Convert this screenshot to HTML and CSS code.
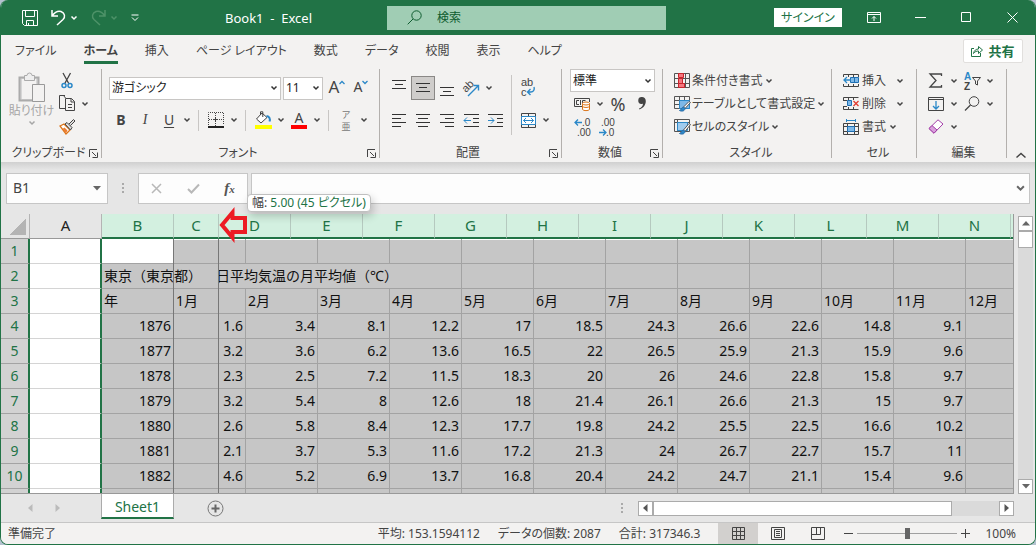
FILE: index.html
```html
<!DOCTYPE html>
<html lang="ja">
<head>
  <meta charset="UTF-8" />
  <title>Book1 - Excel</title>
  <link rel="stylesheet" href="styles.css">
</head>
<body>
  <svg class="defs" aria-hidden="true">
    <symbol id="chev" viewBox="0 0 8 8"><path d="M1.5 2.5 4 5 6.5 2.5" fill="none" stroke="currentColor" stroke-width="1.5"/></symbol>
    <symbol id="launch" viewBox="0 0 9 9"><path d="M.5 8V.5H8M3 3l4 4M8.500 3.500v5h-5" fill="none" stroke="currentColor"/></symbol>
  </svg>

  <div class="window">
    <header class="titlebar">
      <div class="quick">
        <button aria-label="上書き保存"><svg width="16" height="16" viewBox="0 0 16 16"><path d="M.5.5h15v15H2.500l-2-2zM3.500.5v6h9v-6M4.500 15.500v-5h7v5M6.500 13v2.500" /></svg></button>
        <button aria-label="元に戻す"><svg width="15" height="17" viewBox="0 0 15 17"><path d="M1 1v6h6M1 7c3-4 6-5.500 9-4.500 4 1.500 4.500 5.500 2 8L6 16" stroke-width="1.500"/></svg></button>
        <button class="chev" aria-label="元に戻す履歴"><svg width="8" height="8"><use href="#chev"/></svg></button>
        <button class="off" aria-label="やり直し"><svg width="15" height="17" viewBox="0 0 15 17"><path d="M14 1v6H8M14 7c-3-4-6-5.500-9-4.500-4 1.500-4.500 5.500-2 8L9 16" stroke-width="1.500"/></svg></button>
        <button class="chev off" aria-label="やり直し履歴"><svg width="8" height="8"><use href="#chev"/></svg></button>
        <button class="custom" aria-label="クイック アクセスのカスタマイズ"><svg width="8" height="8" viewBox="0 0 8 8"><path d="M.5 1h7M1 3.500l3 3 3-3"/></svg></button>
      </div>
      <div class="doc-title">Book1&nbsp; - &nbsp;Excel</div>
      <label class="search">
        <svg width="15" height="15" viewBox="0 0 15 15"><circle cx="9.500" cy="5.500" r="4.700"/><path d="M6 9 .7 14.300"/></svg>
        <input type="text" placeholder="検索" aria-label="検索">
      </label>
      <div class="win-buttons">
        <button class="signin">サインイン</button>
        <button aria-label="リボンの表示オプション"><svg width="14" height="11" viewBox="0 0 14 11"><path d="M.5.5h13v10H.5zM.5 2.500h13M7 9V4.500M5 6.500l2-2 2 2"/></svg></button>
        <button aria-label="最小化"><svg width="11" height="11" viewBox="0 0 11 11"><path d="M0 5.500h11"/></svg></button>
        <button aria-label="最大化"><svg width="11" height="11" viewBox="0 0 11 11"><path d="M.5.5h9v9h-9z"/></svg></button>
        <button aria-label="閉じる"><svg width="11" height="11" viewBox="0 0 11 11"><path d="m.5.5 10 10M10.500.5l-10 10"/></svg></button>
      </div>
    </header>

    <nav class="tabs">
      <a href="#">ファイル</a>
      <a href="#" class="active">ホーム</a>
      <a href="#">挿入</a>
      <a href="#">ページ レイアウト</a>
      <a href="#">数式</a>
      <a href="#">データ</a>
      <a href="#">校閲</a>
      <a href="#">表示</a>
      <a href="#">ヘルプ</a>
      <button class="share"><svg width="12" height="12" viewBox="0 0 12 12"><path d="M3 3.500H.5v8h9V8M2.500 8.500C3 5.500 5 4 7.500 4V1.500l4 3.500-4 3.500V6C5.500 6 4 6.500 2.500 8.500z"/></svg>共有</button>
    </nav>

    <div class="ribbon">
      <!-- クリップボード -->
      <section class="group clipboard">
        <div class="group-body">
          <button class="paste">
            <svg width="28" height="31" viewBox="0 0 28 31"><path d="M1.500 5.500h19v23h-19z" fill="#d6d6d6" stroke="#ababab" stroke-width="2"/><path d="M4 7h14v20H4z" fill="#f3f2f1"/><path d="M6.500 8.500v-5H9a2.500 2.500 0 0 1 5 0h2.500v5z" fill="#eee" stroke="#ababab"/><path d="M14.500 12.500h12v17h-12z" fill="#f3f2f1" stroke="#999"/></svg>
            <span>貼り付け</span>
            <svg width="8" height="8"><use href="#chev"/></svg>
          </button>
          <div class="rows three">
            <div class="row"><button class="ic" aria-label="切り取り"><svg width="12" height="17" viewBox="0 0 12 17"><path d="M2 1l6 11M9.500 1l-6 11" fill="none" stroke="#444" stroke-width="1.300"/><circle cx="3" cy="13.500" r="2" fill="none" stroke="#2b88c8" stroke-width="1.500"/><circle cx="9" cy="13.500" r="2" fill="none" stroke="#2b88c8" stroke-width="1.500"/></svg></button></div>
            <div class="row"><button class="ic" aria-label="コピー"><svg width="17" height="17" viewBox="0 0 17 17" fill="none" stroke="#444"><path d="M6 .5H.5v13H6M4.500.5 6.500 3"/><path d="M6.500 3.500h6l3 3v9h-9zM12 3.500V7h3.500M9 9.500h4M9 12.500h4"/></svg></button><button class="chev" aria-label="コピーのオプション"><svg width="8" height="8"><use href="#chev"/></svg></button></div>
            <div class="row"><button class="ic" aria-label="書式のコピー"><svg width="17" height="17" viewBox="0 0 17 17"><path d="M1 8l4-2 6 6-4 4z" fill="#fff" stroke="#dc7418" stroke-width="1.300"/><path d="M3.500 11l2-1.500 3 3L7 15z" fill="#ed7d31"/><path d="M6 6l2-1.500 5 5L11.500 12zM10 6l4.500-4.500 1.500 1.500-4.500 4.500" fill="#ddd" stroke="#444"/></svg></button></div>
          </div>
        </div>
        <div class="group-label"><span>クリップボード</span><button aria-label="クリップボードの設定"><svg width="9" height="9"><use href="#launch"/></svg></button></div>
      </section>

      <!-- フォント -->
      <section class="group fonts">
        <div class="group-body rows two">
          <div class="row">
            <select class="font-name" aria-label="フォント"><option>游ゴシック</option></select>
            <select class="font-size" aria-label="フォント サイズ"><option>11</option></select>
            <button class="ic grow" aria-label="フォント サイズの拡大">A<svg width="6" height="5" viewBox="0 0 6 5"><path d="M.5 4 3 1.500 5.500 4" fill="none" stroke="#2b88c8" stroke-width="1.300"/></svg></button>
            <button class="ic shrink" aria-label="フォント サイズの縮小">A<svg width="6" height="5" viewBox="0 0 6 5"><path d="M.5 1 3 3.500 5.500 1" fill="none" stroke="#2b88c8" stroke-width="1.300"/></svg></button>
          </div>
          <div class="row">
            <button class="ic bold">B</button><button class="ic italic">I</button><button class="ic under">U</button><button class="chev" aria-label="下線"><svg width="8" height="8"><use href="#chev"/></svg></button>
            <i class="sep"></i>
            <button class="ic" aria-label="罫線"><svg width="16" height="16" viewBox="0 0 16 16" fill="none" stroke="#444"><path d="M.5 13V.5h15V13" stroke-dasharray="1 1"/><path d="M7.500 1v13M1 7.500h14" stroke-dasharray="1 1"/><path d="M6 7.500h4M7.500 6v4"/><path d="M0 15h16" stroke="#222" stroke-width="2"/></svg></button><button class="chev" aria-label="罫線の種類"><svg width="8" height="8"><use href="#chev"/></svg></button>
            <i class="sep"></i>
            <button class="ic" aria-label="塗りつぶしの色"><svg width="17" height="18" viewBox="0 0 17 18"><path d="M7 2 1.500 8 6 12l6-5.500zM5.500 4V.8h2.300V6" fill="#fff" stroke="#444"/><path d="M11.500 5c3 .5 4 3 3 5.500" fill="none" stroke="#2b88c8" stroke-width="2"/><path d="M0 14h17v4H0z" fill="#ff0"/></svg></button><button class="chev" aria-label="塗りつぶしの色の一覧"><svg width="8" height="8"><use href="#chev"/></svg></button>
            <button class="ic color" aria-label="フォントの色"><span>A</span></button><button class="chev" aria-label="フォントの色の一覧"><svg width="8" height="8"><use href="#chev"/></svg></button>
            <i class="sep"></i>
            <button class="ic ruby" aria-label="ふりがなの表示"><span>ア</span><span>亜</span></button><button class="chev" aria-label="ふりがな"><svg width="8" height="8"><use href="#chev"/></svg></button>
          </div>
        </div>
        <div class="group-label"><span>フォント</span><button aria-label="フォントの設定"><svg width="9" height="9"><use href="#launch"/></svg></button></div>
      </section>

      <!-- 配置 -->
      <section class="group alignment">
        <div class="group-body align">
          <div class="rows two">
            <div class="row">
              <button class="ic" aria-label="上揃え"><svg class="ln" width="14" height="16" viewBox="0 0 14 16"><path d="M0 .5h14M3 4.500h8M0 8.500h14"/></svg></button>
              <button class="ic on" aria-label="上下中央揃え"><svg class="ln" width="14" height="16" viewBox="0 0 14 16"><path d="M0 3.500h14M3 7.500h8M0 11.500h14"/></svg></button>
              <button class="ic" aria-label="下揃え"><svg class="ln" width="14" height="16" viewBox="0 0 14 16"><path d="M0 7.500h14M3 11.500h8M0 15.500h14"/></svg></button>
              <button class="ic" aria-label="方向"><svg width="18" height="18" viewBox="0 0 18 18"><text x="4" y="14" transform="rotate(-45 4 14)" font-size="11" fill="#444">ab</text><path d="M6 17 16 7M11.500 6.500h5v5" fill="none" stroke="#2b88c8" stroke-width="1.400"/></svg></button><button class="chev" aria-label="方向の一覧"><svg width="8" height="8"><use href="#chev"/></svg></button>
            </div>
            <div class="row">
              <button class="ic" aria-label="左揃え"><svg class="ln" width="14" height="14" viewBox="0 0 14 14"><path d="M0 1.500h14M0 5.500h9M0 9.500h14M0 13.500h9"/></svg></button>
              <button class="ic" aria-label="中央揃え"><svg class="ln" width="14" height="14" viewBox="0 0 14 14"><path d="M0 1.500h14M2 5.500h10M0 9.500h14M2 13.500h10"/></svg></button>
              <button class="ic" aria-label="右揃え"><svg class="ln" width="14" height="14" viewBox="0 0 14 14"><path d="M0 1.500h14M5 5.500h9M0 9.500h14M5 13.500h9"/></svg></button>
              <button class="ic" aria-label="インデントを減らす"><svg class="ln" width="15" height="14" viewBox="0 0 15 14"><path d="M0 1.500h15M9 5.500h6M9 9.500h6M0 13.500h15"/><path d="M0 7.500h7M3 4.500l-3 3 3 3" stroke="#2b88c8"/></svg></button>
              <button class="ic" aria-label="インデントを増やす"><svg class="ln" width="15" height="14" viewBox="0 0 15 14"><path d="M0 1.500h15M9 5.500h6M9 9.500h6M0 13.500h15"/><path d="M0 7.500h6M3 4.500l3 3-3 3" stroke="#2b88c8"/></svg></button>
            </div>
          </div>
          <i class="sep tall"></i>
          <div class="rows two">
            <div class="row"><button class="ic" aria-label="折り返して全体を表示する"><svg width="16" height="20" viewBox="0 0 16 20"><text x="1" y="8" font-size="11" fill="#444">ab</text><text x="1" y="18" font-size="11" fill="#444">c</text><path d="M14 9c1 3-1 5-3 5H8M10.500 11l-3 3 3 3" fill="none" stroke="#2b88c8" stroke-width="1.400"/></svg></button></div>
            <div class="row"><button class="ic" aria-label="セルを結合して中央揃え"><svg width="15" height="15" viewBox="0 0 15 15" fill="none" stroke="#444"><path d="M.5.5h14v14H.5zM7.500.5v3M7.500 11.500v3"/><path d="M.5 3.500h14v8H.5z" fill="#fff" stroke="#2b88c8"/><path d="M2.500 7.500h10M5 5 2.500 7.500 5 10M10 5l2.500 2.500L10 10" stroke="#2b88c8"/></svg></button><button class="chev" aria-label="結合の種類"><svg width="8" height="8"><use href="#chev"/></svg></button></div>
          </div>
        </div>
        <div class="group-label"><span>配置</span><button aria-label="配置の設定"><svg width="9" height="9"><use href="#launch"/></svg></button></div>
      </section>

      <!-- 数値 -->
      <section class="group number">
        <div class="group-body rows three">
          <div class="row"><select class="num-format" aria-label="表示形式"><option>標準</option></select></div>
          <div class="row">
            <button class="ic" aria-label="通貨表示形式"><svg width="17" height="14" viewBox="0 0 17 14" fill="none" stroke="#444"><path d="M8 9.500H.5v-8h15V5M5 3.500H2.500v4H5M8.500 7V3.500h3M6.500 3v5"/><path d="M8.500 6.500v6c1 1.500 6 1.500 7 0v-6z" fill="#fff" stroke="#dc7418"/><ellipse cx="12" cy="6.500" rx="3.500" ry="1.500" fill="#fff" stroke="#dc7418"/><path d="M8.500 9.500c1 1.300 6 1.300 7 0" stroke="#dc7418"/></svg></button><button class="chev" aria-label="通貨の種類"><svg width="8" height="8"><use href="#chev"/></svg></button>
            <button class="ic pct" aria-label="パーセント スタイル">%</button><button class="ic" aria-label="桁区切りスタイル"><svg width="8" height="13" viewBox="0 0 8 13"><path d="M4 0a3.500 3.500 0 0 0-.5 7c.5 0 1 0 1.500-.5C5 9 3.500 10.500 1 11.500l.5 1C5.500 11 7.800 8 7.800 4 7.800 1.500 6 0 4 0z" fill="#444"/></svg></button>
          </div>
          <div class="row">
            <button class="ic" aria-label="小数点以下の表示桁数を増やす"><svg width="17" height="20" viewBox="0 0 17 20"><path d="M1 5.500h7M4 2.500l-3 3 3 3" fill="none" stroke="#2b88c8" stroke-width="1.300"/><text x="8" y="9" font-size="10" fill="#444">.0</text><text x="3" y="19" font-size="10" fill="#444">.00</text></svg></button>
            <button class="ic" aria-label="小数点以下の表示桁数を減らす"><svg width="17" height="20" viewBox="0 0 17 20"><path d="M1 15.500h7M5 12.500l3 3-3 3" fill="none" stroke="#2b88c8" stroke-width="1.300"/><text x="3" y="9" font-size="10" fill="#444">.00</text><text x="8" y="19" font-size="10" fill="#444">.0</text></svg></button>
          </div>
        </div>
        <div class="group-label"><span>数値</span><button aria-label="数値の設定"><svg width="9" height="9"><use href="#launch"/></svg></button></div>
      </section>

      <!-- スタイル -->
      <section class="group styles">
        <div class="group-body rows three">
          <button class="row"><svg width="16" height="16" viewBox="0 0 16 16" fill="none" stroke="#555"><path d="M.5.5h15v14H.5zM.5 5.500h15M.5 10.500h15M11.500.5v14"/><path d="M4.500.5h5v4h-5zM4.500 10.500h6v4h-6z" fill="#f4777f" stroke="#c8252c"/><path d="M4.500 5.500h4v5h-4z" fill="#f4777f" stroke="#c8252c"/></svg><span>条件付き書式</span><svg width="8" height="8"><use href="#chev"/></svg></button>
          <button class="row"><svg width="16" height="16" viewBox="0 0 16 16" fill="none" stroke="#555"><path d="M.5.5h15v12H.5zM5.500.5v12M10.500.5v4M.5 4.500h15M.5 8.500h5"/><path d="M5.500 4.500h10v8h-10z" fill="#7db8e8" stroke="#2b88c8"/><path d="M15 5.500 9.500 11l1.500 1.500 5.500-6z" fill="#fff"/><path d="M9.500 11c-2 0-2 3-4 3.500 3 1.500 5.500 0 5.500-2z" fill="#2b88c8" stroke="#2b6ca8"/></svg><span>テーブルとして書式設定</span><svg width="8" height="8"><use href="#chev"/></svg></button>
          <button class="row"><svg width="16" height="16" viewBox="0 0 16 16" fill="none" stroke="#555"><path d="M.5.5h15v12H.5zM3.500.5v12M.5 3.500h15"/><path d="M3.500 3.500h10v8h-10z" fill="#9fcbee" stroke="#2b88c8"/><path d="M15 4.500 9.500 11l1.500 1.500 5.500-7z" fill="#fff"/><path d="M9.500 11c-2 0-2 3-4 3.500 3 1.500 5.500 0 5.500-2z" fill="#2b88c8" stroke="#2b6ca8"/></svg><span>セルのスタイル</span><svg width="8" height="8"><use href="#chev"/></svg></button>
        </div>
        <div class="group-label"><span>スタイル</span></div>
      </section>

      <!-- セル -->
      <section class="group cells">
        <div class="group-body rows three">
          <button class="row"><svg width="16" height="15" viewBox="0 0 16 15" fill="none" stroke="#444"><path d="M.5 4V1.500h15V4M.5 11v2.500h15V11M5.500 1.500V4M10.500 1.500V4M5.500 11v2.500M10.500 11v2.500"/><path d="M7.500 4.500h8v5h-8zM11.500 4.500v5" fill="#7db8e8" stroke="#1f6fb2"/><path d="M8 7H1M4 4 1 7l3 3" stroke="#2b88c8" stroke-width="1.300"/></svg><span>挿入</span><svg width="8" height="8"><use href="#chev"/></svg></button>
          <button class="row"><svg width="16" height="15" viewBox="0 0 16 15" fill="none" stroke="#444"><path d="M.5 4V1.500h15M.5 11v2.500h15M5.500 1.500V4M10.500 1.500V4M5.500 11v2.500M10.500 11v2.500M0 4.500h4M0 10.500h4"/><path d="M4.500 4.500h4v5h-4z" fill="#7db8e8" stroke="#1f6fb2"/><path d="M10.500 5l5 5M15.500 5l-5 5" stroke="#e03c31" stroke-width="1.300"/></svg><span>削除</span><svg width="8" height="8"><use href="#chev"/></svg></button>
          <button class="row narrow"><svg width="16" height="16" viewBox="0 0 16 16" fill="none" stroke="#444"><path d="M.5 4.500h15v11H.5zM4.500 4.500v11M11.500 4.500v11M.5 7.500h15M.5 12.500h15"/><path d="M4.500 7.500h7v5h-7z" fill="#7db8e8" stroke="#1f6fb2"/><path d="M3.500 0v3M12.500 0v3M3.500 1.500h9" stroke="#2b88c8"/></svg><span>書式</span><svg width="8" height="8"><use href="#chev"/></svg></button>
        </div>
        <div class="group-label"><span>セル</span></div>
      </section>

      <!-- 編集 -->
      <section class="group edit">
        <div class="group-body rows three">
          <div class="row">
            <button class="ic" aria-label="オート SUM"><svg width="14" height="15" viewBox="0 0 14 15"><path d="M12.500 3V1H1l6 6.500L1 14h11.500v-2" fill="none" stroke="#444" stroke-width="1.300"/></svg></button><button class="chev" aria-label="関数"><svg width="8" height="8"><use href="#chev"/></svg></button>
            <button class="ic" aria-label="並べ替えとフィルター"><svg width="17" height="20" viewBox="0 0 17 20"><text x="0" y="9" font-size="10" font-weight="700" fill="#2b88c8">A</text><text x="0" y="19" font-size="10" font-weight="700" fill="#444">Z</text><path d="M8.500 6.500h8l-3 3.500v4l-2-1v-3z" fill="none" stroke="#444"/></svg></button><button class="chev" aria-label="並べ替えの種類"><svg width="8" height="8"><use href="#chev"/></svg></button>
          </div>
          <div class="row">
            <button class="ic" aria-label="フィル"><svg width="16" height="14" viewBox="0 0 16 14"><path d="M.5.5h15v13H.5zM.5 2.500h15" fill="none" stroke="#444"/><path d="M8 4v8M5 9l3 3 3-3" fill="none" stroke="#2b88c8" stroke-width="1.300"/></svg></button><button class="chev" aria-label="フィルの種類"><svg width="8" height="8"><use href="#chev"/></svg></button>
            <button class="ic" aria-label="検索と選択"><svg width="16" height="15" viewBox="0 0 16 15"><circle cx="10" cy="5.500" r="4.800" fill="none" stroke="#444"/><path d="M6.500 9 1 14.500" stroke="#444" stroke-width="1.200"/></svg></button><button class="chev" aria-label="検索の種類"><svg width="8" height="8"><use href="#chev"/></svg></button>
          </div>
          <div class="row">
            <button class="ic" aria-label="クリア"><svg width="16" height="15" viewBox="0 0 16 15"><path d="M1 9.500 10 .8l5 4.200-9 9.200z" fill="#fff" stroke="#a33fa8"/><path d="M1 9.500 4 6.500l5 4.500-3 3.200z" fill="#d9a0dc" stroke="#a33fa8"/></svg></button><button class="chev" aria-label="クリアの種類"><svg width="8" height="8"><use href="#chev"/></svg></button>
          </div>
        </div>
        <div class="group-label"><span>編集</span></div>
      </section>
      <button class="collapse" aria-label="リボンを折りたたむ"><svg width="10" height="6" viewBox="0 0 10 6"><path d="m.5 5.500 4.500-4 4.500 4" fill="none" stroke="#444" stroke-width="1.500"/></svg></button>
    </div>

    <div class="formula-bar">
      <div class="name-box"><input type="text" value="B1" aria-label="名前ボックス"><svg width="8" height="5" viewBox="0 0 8 5"><path d="M0 0h8L4 4.500z" fill="#666"/></svg></div>
      <i class="dots"></i>
      <div class="fx">
        <button aria-label="キャンセル"><svg width="11" height="11" viewBox="0 0 11 11"><path d="m1 1 9 9M10 1l-9 9" stroke="#b8b8b8" stroke-width="1.500"/></svg></button>
        <button aria-label="入力"><svg width="13" height="11" viewBox="0 0 13 11"><path d="m1 6 3.500 3.500L12 1.500" fill="none" stroke="#b8b8b8" stroke-width="2"/></svg></button>
        <button class="fn" aria-label="関数の挿入">f<small>x</small></button>
      </div>
      <div class="formula"><input type="text" aria-label="数式バー"><svg width="9" height="9" viewBox="0 0 8 8"><path d="M1 2l3 3 3-3" fill="none" stroke="#666" stroke-width="1.800"/></svg></div>
    </div>

    <main class="sheet">
      <div class="grid">
        <div class="col-heads">
          <div class="corner"></div>
          <div class="plain">A</div>
          <div>B</div><div class="c">C</div><div>D</div><div>E</div><div>F</div><div>G</div><div>H</div><div>I</div><div>J</div><div>K</div><div>L</div><div>M</div><div>N</div><div class="rest"></div>
        </div>
        <table>
          <colgroup><col class="num"><col span="14"></colgroup>
          <tr class="first"><th>1</th><td class="a"></td><td class="cursor"></td><td></td><td></td><td></td><td></td><td></td><td></td><td></td><td></td><td></td><td></td><td></td><td></td></tr>
          <tr class="text"><th>2</th><td class="a"></td><td colspan="5">東京（東京都）　日平均気温の月平均値（℃）</td><td></td><td></td><td></td><td></td><td></td><td></td><td></td><td></td></tr>
          <tr class="text"><th>3</th><td class="a"></td><td>年</td><td>1月</td><td>2月</td><td>3月</td><td>4月</td><td>5月</td><td>6月</td><td>7月</td><td>8月</td><td>9月</td><td>10月</td><td>11月</td><td>12月</td></tr>
          <tr><th>4</th><td class="a"></td><td>1876</td><td>1.6</td><td>3.4</td><td>8.1</td><td>12.2</td><td>17</td><td>18.5</td><td>24.3</td><td>26.6</td><td>22.6</td><td>14.8</td><td>9.1</td><td></td></tr>
          <tr><th>5</th><td class="a"></td><td>1877</td><td>3.2</td><td>3.6</td><td>6.2</td><td>13.6</td><td>16.5</td><td>22</td><td>26.5</td><td>25.9</td><td>21.3</td><td>15.9</td><td>9.6</td><td></td></tr>
          <tr><th>6</th><td class="a"></td><td>1878</td><td>2.3</td><td>2.5</td><td>7.2</td><td>11.5</td><td>18.3</td><td>20</td><td>26</td><td>24.6</td><td>22.8</td><td>15.8</td><td>9.7</td><td></td></tr>
          <tr><th>7</th><td class="a"></td><td>1879</td><td>3.2</td><td>5.4</td><td>8</td><td>12.6</td><td>18</td><td>21.4</td><td>26.1</td><td>26.6</td><td>21.3</td><td>15</td><td>9.7</td><td></td></tr>
          <tr><th>8</th><td class="a"></td><td>1880</td><td>2.6</td><td>5.8</td><td>8.4</td><td>12.3</td><td>17.7</td><td>19.8</td><td>24.2</td><td>25.5</td><td>22.5</td><td>16.6</td><td>10.2</td><td></td></tr>
          <tr><th>9</th><td class="a"></td><td>1881</td><td>2.1</td><td>3.7</td><td>5.3</td><td>11.6</td><td>17.2</td><td>21.3</td><td>24</td><td>26.7</td><td>22.7</td><td>15.7</td><td>11</td><td></td></tr>
          <tr><th>10</th><td class="a"></td><td>1882</td><td>4.6</td><td>5.2</td><td>6.9</td><td>13.7</td><td>16.8</td><td>20.4</td><td>24.2</td><td>24.7</td><td>21.1</td><td>15.4</td><td>9.6</td><td></td></tr>
          <tr><th></th><td class="a"></td><td></td><td></td><td></td><td></td><td></td><td></td><td></td><td></td><td></td><td></td><td></td><td></td><td></td></tr>
        </table>
        <!-- 列幅変更中のガイド線 -->
        <div class="resize-guide"></div>
      </div>
      <div class="vscroll">
        <button aria-label="上へ"><svg width="8" height="5" viewBox="0 0 8 5"><path d="M0 4.500 4 0l4 4.500z" fill="#666"/></svg></button>
        <div class="thumb"></div>
        <button class="end" aria-label="下へ"><svg width="8" height="5" viewBox="0 0 8 5"><path d="M0 0h8L4 4.500z" fill="#666"/></svg></button>
      </div>
      <div class="width-tip">幅: <b>5.00 (45 ピクセル)</b></div>
      <svg class="arrow" width="28" height="32" viewBox="0 0 28 32"><path d="M3 16 13.500 3.500V9H26v14H13.500v5.500z" fill="#d3f0e0" stroke="#ed1c24" stroke-width="4"/></svg>
    </main>

    <div class="sheet-tabs">
      <div class="tab-nav">
        <button aria-label="前のシート"><svg width="5" height="8" viewBox="0 0 5 8"><path d="M4.500 0v8L0 4z" fill="#bbb"/></svg></button>
        <button aria-label="次のシート"><svg width="5" height="8" viewBox="0 0 5 8"><path d="M.5 0v8L5 4z" fill="#bbb"/></svg></button>
      </div>
      <a href="#" class="sheet-tab">Sheet1</a>
      <button class="add" aria-label="新しいシート"><svg width="17" height="17" viewBox="0 0 17 17"><circle cx="8.500" cy="8.500" r="7.500" fill="none" stroke="#777"/><path d="M8.500 4.500v8M4.500 8.500h8" stroke="#666" stroke-width="2"/></svg></button>
      <i class="dots"></i>
      <div class="hscroll">
        <button aria-label="左へ"><svg width="5" height="8" viewBox="0 0 5 8"><path d="M4.500 0v8L0 4z" fill="#555"/></svg></button>
        <div class="thumb"></div>
        <button class="end" aria-label="右へ"><svg width="5" height="8" viewBox="0 0 5 8"><path d="M.5 0v8L5 4z" fill="#555"/></svg></button>
      </div>
    </div>

    <footer class="status">
      <span class="ready">準備完了</span>
      <span>平均: 153.1594112</span>
      <span>データの個数: 2087</span>
      <span>合計: 317346.3</span>
      <div class="views">
        <button class="on" aria-label="標準"><svg width="13" height="13" viewBox="0 0 13 13"><path d="M.5.5h12v12H.5zM4.500.5v12M8.500.5v12M.5 4.500h12M.5 8.500h12"/></svg></button>
        <button aria-label="ページ レイアウト"><svg width="14" height="13" viewBox="0 0 14 13"><path d="M.5.5h13v12H.5zM3.500 2.500h7v8h-7zM5 4.500h4M5 6.500h4M5 8.500h4"/></svg></button>
        <button aria-label="改ページ プレビュー"><svg width="14" height="13" viewBox="0 0 14 13"><path d="M.5.5h13v12H.5zM.5 7.500h9v-7M5.500.5v7"/></svg></button>
      </div>
      <div class="zoom">
        <button aria-label="縮小"><svg width="9" height="9" viewBox="0 0 9 9"><path d="M0 4.500h9"/></svg></button>
        <input type="range" min="0" max="100" value="50" aria-label="ズーム">
        <button aria-label="拡大"><svg width="9" height="9" viewBox="0 0 9 9"><path d="M0 4.500h9M4.500 0v9"/></svg></button>
        <span>100%</span>
      </div>
    </footer>
  </div>
</body>
</html>
```
FILE: styles.css
```css
* {
  box-sizing: border-box;
}

body {
  margin: 0;
  background: #b4c2cf;
  color: #444;
  font: 12px/16px "Noto Sans", "Noto Sans CJK JP", sans-serif;
  font-feature-settings: "palt";
}

button, input, select {
  margin: 0;
  padding: 0;
  border: 0;
  border-radius: 0;
  background: none;
  color: inherit;
  font: inherit;
  font-feature-settings: "palt";
}

a {
  color: inherit;
  text-decoration: none;
}

svg {
  display: block;
  flex: none;
  overflow: visible;
}

svg text {
  font-family: "Liberation Sans", sans-serif;
}

.defs {
  position: absolute;
  width: 0;
  height: 0;
}

.window {
  display: flex;
  flex-direction: column;
  height: 100vh;
  overflow: hidden;
  border: 1px solid #217346;
  border-top: 0;
  border-radius: 8px;
  background: #e6e6e6;
}

/* title bar */
.titlebar {
  display: flex;
  align-items: center;
  height: 35px;
  background: #217346;
  color: #fff;
}

.titlebar svg {
  fill: none;
  stroke: currentColor;
}

.titlebar use {
  stroke: none;
}

.quick {
  display: flex;
  align-items: center;
  width: 224px;
  padding-left: 21px;
}

.quick button {
  margin-right: 13px;
}

.quick button:has(+ .chev) {
  margin-right: 4px;
}

.quick .chev {
  width: 8px;
}

.quick .off {
  color: #4d9268;
}

.doc-title {
  width: 162px;
  font-size: 13px;
}

.search {
  display: flex;
  align-items: center;
  flex: 0 1 279px;
  height: 24px;
  padding-left: 20px;
  background: #a0cdb4;
  color: #0e5c2f;
}

.search input {
  width: 100%;
  padding-left: 15px;
}

.search input::placeholder {
  color: #0e5c2f;
}

.win-buttons {
  display: flex;
  align-items: center;
  margin-left: auto;
}

.win-buttons button {
  display: grid;
  place-items: center;
  width: 46px;
}

.win-buttons .signin {
  width: 68px;
  height: 19px;
  margin-right: 9px;
  background: #fff;
  color: #217346;
}

/* tabs */
.tabs {
  display: flex;
  align-items: center;
  gap: 27px;
  height: 34px;
  padding: 0 12px 2px 14px;
  background: #f3f2f1;
}

.tabs a {
  padding: 4px 0 2px;
  border-bottom: 3px solid transparent;
}

.tabs .active {
  border-color: #217346;
  font-weight: 700;
}

.share {
  display: flex;
  align-items: center;
  justify-content: center;
  gap: 5px;
  width: 60px;
  height: 24px;
  margin-left: auto;
  border: 1px solid #e1dfdd;
  border-radius: 2px;
  background: #fff;
  color: #217346;
  font-size: 13px;
  font-weight: 700;
}

.share svg {
  fill: none;
  stroke: currentColor;
}

/* ribbon */
.ribbon {
  display: flex;
  height: 93px;
  padding-bottom: 4px;
  background: #f3f2f1;
}

.group {
  display: flex;
  flex: none;
  flex-direction: column;
  padding-left: 7px;
  border-right: 1px solid #b3b0ad;
  white-space: nowrap;
}

.group-body {
  height: 75px;
}

.group-label {
  display: flex;
  align-items: center;
  margin-top: auto;
  padding-right: 3px;
  line-height: 10px;
}

.group-label span {
  flex: 1;
  text-align: center;
}

.rows {
  display: flex;
  flex-direction: column;
}

.rows.three .row {
  height: 23px;
}

.rows.two {
  padding-top: 3px;
}

.rows.two .row {
  height: 32px;
}

.row {
  display: flex;
  align-items: center;
}

.ic {
  display: grid;
  place-items: center;
  width: 24px;
  height: 24px;
}

.chev {
  display: grid;
  place-items: center;
  width: 12px;
}

.ic.on {
  border: 1px solid #8a8886;
  background: #cfcdcb;
}

.ln {
  fill: none;
  stroke: #333;
}

.sep {
  width: 1px;
  height: 21px;
  margin: 0 5px;
  background: #c8c6c4;
}

.sep.tall {
  height: 60px;
  margin: 6px 4px 0 4px;
}

.align {
  display: flex;
}

.clipboard {
  width: 101px;
}

.clipboard .group-body {
  display: flex;
}

.paste {
  display: flex;
  flex-direction: column;
  align-items: center;
  width: 47px;
  padding-top: 3px;
  color: #a6a6a6;
}

.fonts {
  width: 278px;
}

.alignment {
  width: 182px;
}

select {
  height: 23px;
  padding-left: 2px;
  border: 1px solid #c8c6c4;
  appearance: none;
  background: #fff url("data:image/svg+xml,%3Csvg xmlns='http://www.w3.org/2000/svg' width='8' height='8'%3E%3Cpath d='M1.500 2.500 4 5l2.500-2.500' fill='none' stroke='%23333' stroke-width='1.500'/%3E%3C/svg%3E") no-repeat right 2px center;
  color: #222;
}

.font-name {
  width: 172px;
  margin-right: 2px;
}

.font-size {
  width: 40px;
  margin-right: 2px;
}

.num-format {
  width: 85px;
}

.grow, .shrink {
  display: flex;
  justify-content: center;
  align-items: flex-start;
  font-size: 17px;
  line-height: 22px;
}

.shrink {
  font-size: 14px;
}

.grow svg, .shrink svg {
  margin-top: 4px;
}

.bold, .italic, .under {
  font-size: 14px;
}

.bold {
  font-weight: 700;
}

.italic {
  font-family: "Liberation Serif", serif;
  font-style: italic;
}

.under {
  text-decoration: underline;
  text-underline-offset: 2px;
}

.color span {
  height: 17px;
  border-bottom: 4px solid #f00;
  padding: 0 4px;
  font-size: 14px;
  line-height: 12px;
}

.ruby {
  color: #777;
  font-size: 9px;
  line-height: 9px;
}

.pct {
  font-size: 18px;
}

.number {
  width: 101px;
  padding-left: 8px;
}

.styles, .cells {
  padding-left: 11px;
}

.styles .row, .cells .row {
  gap: 3px;
}

.styles .row {
  gap: 2px;
}

.styles {
  width: 169px;
}

.cells {
  width: 85px;
}

.cells .row span {
  margin-right: 7px;
}

.cells .narrow span {
  margin-right: 0;
}

.edit {
  width: 90px;
}

.collapse {
  margin: auto 9px 0 auto;
}

/* formula bar */
.formula-bar {
  display: flex;
  align-items: center;
  height: 52px;
  padding: 0 5px;
  background: linear-gradient(#d0d0d0, #e6e6e6 8px);
}

.name-box, .fx, .formula {
  display: flex;
  align-items: center;
  height: 31px;
  border: 1px solid #c6c6c6;
  background: #fdfdfd;
}

.name-box {
  width: 102px;
  padding: 0 6px;
}

.name-box input, .formula input {
  flex: 1;
  min-width: 0;
  font-size: 14px;
}

.dots {
  width: 2px;
  height: 10px;
  background: repeating-linear-gradient(#aaa 0 2px, transparent 2px 4px);
}

.formula-bar .dots {
  margin: 0 14px;
}

.fx {
  justify-content: space-around;
  width: 110px;
}

.fx .fn {
  color: #555;
  font: italic 700 15px "Liberation Serif", serif;
}

.fn small {
  font-size: 11px;
}

.formula {
  flex: 1;
  margin-left: 3px;
  padding-right: 4px;
}

/* sheet */
.sheet {
  position: relative;
  display: flex;
  flex: 1;
  min-height: 0;
}

.grid {
  position: relative;
  flex: 1;
  min-width: 0;
  overflow: hidden;
  border-right: 1px solid #999;
  border-bottom: 1px solid #999;
}

.col-heads {
  display: flex;
  height: 25px;
  font-size: 15px;
  line-height: 23px;
  text-align: center;
}

.col-heads div {
  flex: 0 0 72px;
  border-right: 1px solid #b5c9bf;
  border-bottom: 2px solid #217346;
  background: #d3f0e0;
  color: #217346;
}

.col-heads .corner {
  flex-basis: 29px;
  border-right: 1px solid #b4b4b4;
  border-bottom: 1px solid #999;
  background: linear-gradient(135deg, transparent 50%, #b4b4b4 50%) 8px 4px / 17px 17px no-repeat #e6e6e6;
}

.col-heads .plain {
  border-color: #999;
  border-right-color: #b4b4b4;
  border-bottom-width: 1px;
  background: #e6e6e6;
  color: #222;
}

.col-heads .c {
  flex-basis: 45px;
}

.col-heads .rest {
  flex: 1 0 3px;
}

table {
  width: 1037px;
  table-layout: fixed;
  border-collapse: separate;
  border-spacing: 0;
  color: #111;
  font-size: 14px;
  line-height: 20px;
  font-feature-settings: normal;
  text-spacing-trim: space-all;
}

.num {
  width: 29px;
}

th, td {
  height: 25px;
  padding: 0 2px;
  border-right: 1px solid #a3a3a3;
  border-bottom: 1px solid #a3a3a3;
  background: #c6c6c6;
  text-align: right;
  white-space: nowrap;
}

th {
  padding: 0;
  border-right: 2px solid #217346;
  background: #d2d2d2;
  color: #217346;
  font-weight: 400;
  text-align: center;
}

.first td {
  box-shadow: inset 0 1px #fff;
}

.text td {
  text-align: left;
}

td.a {
  border-right: 2px solid #217346;
  border-bottom-color: #d4d4d4;
  background: #fff;
}

.cursor {
  background: #fff;
}

.resize-guide {
  position: absolute;
  top: 25px;
  bottom: 0;
  left: 172px;
  width: 46px;
  border: solid #777;
  border-width: 0 1px;
}

.width-tip {
  position: absolute;
  top: -20px;
  left: 246px;
  padding: 0 4px;
  border: 1px solid #c0c0c0;
  border-radius: 4px;
  background: #fff;
  box-shadow: 2px 4px 8px #0003;
  white-space: nowrap;
}

.width-tip b {
  color: #217346;
  font-weight: 400;
}

.arrow {
  position: absolute;
  top: -5px;
  left: 218px;
}

.vscroll {
  display: flex;
  flex-direction: column;
  width: 15px;
  margin: 2px 2px 0 4px;
  background: #dadada;
}

.vscroll button, .hscroll button {
  display: grid;
  place-items: center;
  flex: 0 0 15px;
  border: 1px solid #ababab;
  background: #fff;
}

.thumb {
  border: 1px solid #ababab;
  background: #fff;
}

.vscroll .thumb {
  height: 17px;
}

.vscroll .end {
  margin-top: auto;
}

.hscroll .end {
  margin-left: auto;
}

/* sheet tabs */
.sheet-tabs {
  display: flex;
  align-items: center;
  height: 28px;
  padding-right: 21px;
}

.tab-nav {
  display: flex;
  gap: 22px;
  width: 100px;
  padding-left: 27px;
}

.sheet-tab {
  align-self: flex-start;
  width: 73px;
  height: 25px;
  border: solid #ababab;
  border-width: 0 1px 2px;
  border-bottom-color: #217346;
  background: #fff;
  color: #217346;
  font-size: 14px;
  line-height: 26px;
  text-align: center;
}

.add {
  margin: 0 auto 0 33px;
}

.hscroll {
  display: flex;
  width: 376px;
  height: 15px;
  margin-left: 15px;
  background: #dadada;
}

.hscroll .thumb {
  width: 299px;
}

/* status bar */
.status {
  display: flex;
  align-items: center;
  gap: 18px;
  height: 22px;
  padding: 0 19px 0 7px;
  border-top: 1px solid #c6c6c6;
  background: #f3f2f1;
}

.ready {
  margin-right: auto;
}

.status svg {
  fill: none;
  stroke: #444;
}

.views {
  display: flex;
  align-self: stretch;
}

.views button {
  display: grid;
  place-items: center;
  width: 40px;
}

.views .on {
  background: #d2d0ce;
}

.zoom {
  display: flex;
  align-items: center;
  gap: 4px;
  margin-left: -12px;
}

.zoom span {
  margin-left: 11px;
}

.zoom input {
  width: 100px;
  height: 12px;
  appearance: none;
  background: linear-gradient(#a0a0a0, #a0a0a0) center / 100% 1px no-repeat;
}

.zoom input::-webkit-slider-thumb {
  appearance: none;
  width: 5px;
  height: 11px;
  background: #666;
}
```
